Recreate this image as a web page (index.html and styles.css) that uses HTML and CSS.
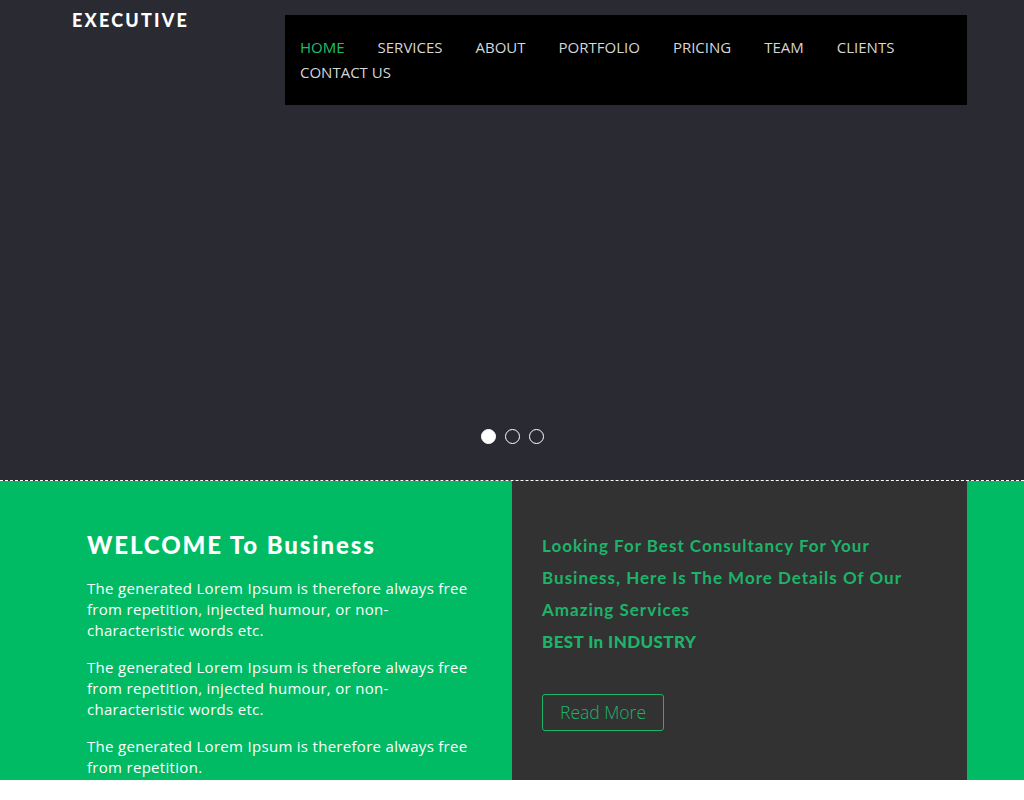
FILE: index.html
```html
<!DOCTYPE html>
<html lang="en">
<head>
    <meta charset="UTF-8">
    <meta name="viewport" content="width=device-width, initial-scale=1.0">
    <title>Executive</title>
    <link rel="stylesheet" href="styles.css">
</head>
<body>
    <header class="banner">
        <div class="container top-bar">
            <div class="logo"><a href="#">EXECUTIVE</a></div>
            <nav class="main-nav">
                <ul>
                    <li><a href="#" class="active">HOME</a></li>
                    <li><a href="#">SERVICES</a></li>
                    <li><a href="#">ABOUT</a></li>
                    <li><a href="#">PORTFOLIO</a></li>
                    <li><a href="#">PRICING</a></li>
                    <li><a href="#">TEAM</a></li>
                    <li><a href="#">CLIENTS</a></li>
                    <li><a href="#">CONTACT US</a></li>
                </ul>
            </nav>
        </div>
        <div class="slider-dots">
            <span class="dot current"></span>
            <span class="dot"></span>
            <span class="dot"></span>
        </div>
    </header>

    <section class="welcome">
        <div class="container welcome-grid">
            <div class="welcome-left">
                <h2>WELCOME To Business</h2>
                <p>The generated Lorem Ipsum is therefore always free from repetition, injected humour, or non-characteristic words etc.</p>
                <p>The generated Lorem Ipsum is therefore always free from repetition, injected humour, or non-characteristic words etc.</p>
                <p>The generated Lorem Ipsum is therefore always free from repetition.</p>
            </div>
            <div class="welcome-right">
                <h3>Looking For Best Consultancy For Your Business, Here Is The More Details Of Our Amazing Services</h3>
                <h4>BEST In INDUSTRY</h4>
                <a href="#" class="read-more">Read More</a>
            </div>
        </div>
    </section>
</body>
</html>
```

FILE: styles.css
```css
body {
    margin: 0;
    padding: 0;
    font-family: "Open Sans", Arial, sans-serif;
    background: #fff;
    color: #fff;
}
a {
    text-decoration: none;
}
.container {
    width: 910px;
    margin: 0 auto;
}

/* banner */
.banner {
    background-color: #2a2a33;
    height: 480px;
    border-bottom: 1px dashed #fff;
    display: flex;
    flex-direction: column;
}
.top-bar {
    display: flex;
    align-items: flex-start;
}
.logo {
    width: 228px;
    padding: 9px 0 0 15px;
    box-sizing: border-box;
}
.logo a {
    color: #fff;
    font-family: "Lato", sans-serif;
    font-weight: 900;
    font-size: 18px;
    letter-spacing: 2.2px;
}
.main-nav {
    flex: 1;
    margin-top: 15px;
    background: #000;
    padding: 20px 15px;
}
.main-nav ul {
    list-style: none;
    margin: 0;
    padding: 0;
    display: flex;
    flex-wrap: wrap;
    column-gap: 33px;
}
.main-nav a {
    display: block;
    line-height: 25px;
    font-size: 15px;
    color: #d6d6d6;
}
.main-nav a.active {
    color: #1fbf6a;
}
.slider-dots {
    margin-top: auto;
    margin-bottom: 36px;
    display: flex;
    justify-content: center;
    gap: 9px;
}
.dot {
    width: 15px;
    height: 15px;
    box-sizing: border-box;
    border: 1.5px solid #fff;
    border-radius: 50%;
}
.dot.current {
    background: #fff;
}

/* welcome */
.welcome {
    background-color: #00bb63;
}
.welcome-grid {
    display: grid;
    grid-template-columns: 1fr 1fr;
}
.welcome-left {
    padding: 49px 30px 2px;
}
.welcome-left h2 {
    margin: 0 0 18px;
    font-family: "Lato", sans-serif;
    font-weight: 900;
    font-size: 24px;
    line-height: 30px;
    letter-spacing: 1.9px;
}
.welcome-left p {
    margin: 0 0 16px;
    font-size: 15px;
    line-height: 21px;
    letter-spacing: 0.3px;
}
.welcome-left p:last-child {
    margin-bottom: 0;
}
.welcome-right {
    background-color: #323232;
    padding: 49px 30px 0;
    color: #1db46a;
}
.welcome-right h3,
.welcome-right h4 {
    margin: 0;
    font-family: "Lato", sans-serif;
    font-size: 17px;
    line-height: 32px;
    font-weight: 700;
    letter-spacing: 1px;
}
.welcome-right h4 {
    font-weight: 900;
    letter-spacing: 0.4px;
}
.read-more {
    display: inline-block;
    margin-top: 36px;
    padding: 0 17px;
    line-height: 35px;
    border: 1px solid #1db46a;
    border-radius: 3px;
    color: #1db46a;
    font-size: 17.5px;
    font-weight: 300;
}
```
